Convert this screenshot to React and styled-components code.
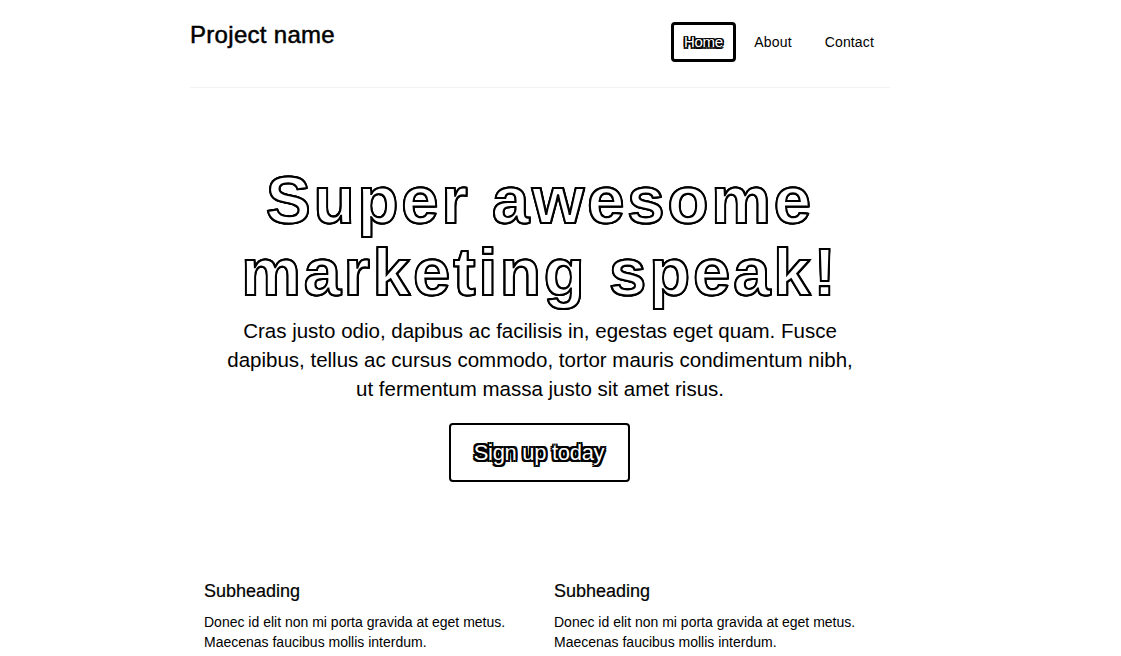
import React from "react";
import styled, { createGlobalStyle } from "styled-components";

const Global = createGlobalStyle`
  html, body { margin: 0; padding: 0; background: #fff; }
  body {
    font-family: "Liberation Sans", Arial, sans-serif;
    color: #000;
    padding-top: 22px;
  }
  * { box-sizing: border-box; }
`;

const Container = styled.div`
  width: 700px;
  margin-left: 190px;
`;

const Header = styled.header`
  display: flex;
  justify-content: space-between;
  align-items: flex-start;
  padding-bottom: 25px;
  border-bottom: 1px solid #f3f3f3;
`;

const Brand = styled.h3`
  margin: 0;
  font-size: 24px;
  font-weight: 400;
  line-height: 1.1;
  letter-spacing: 0.3px;
  -webkit-text-stroke: 0.5px #000;
`;

const Nav = styled.nav`
  display: flex;
  gap: 3px;
  margin-right: 1px;
`;

const outline = (w) => `
  text-shadow:
    ${w}px 0 0 #000, -${w}px 0 0 #000, 0 ${w}px 0 #000, 0 -${w}px 0 #000,
    ${w}px ${w}px 0 #000, -${w}px ${w}px 0 #000, ${w}px -${w}px 0 #000, -${w}px -${w}px 0 #000;
`;

const NavLink = styled.a`
  display: block;
  height: 40px;
  padding: 0 ${(p) => (p.$active ? "10.5px" : "15px")};
  font-size: ${(p) => (p.$active ? "15px" : "14px")};
  color: ${(p) => (p.$active ? "#fff" : "#000")};
  border: ${(p) => (p.$active ? "3px solid #000" : "none")};
  border-radius: 4px;
  line-height: ${(p) => (p.$active ? "34px" : "40px")};
  letter-spacing: ${(p) => (p.$active ? "-0.3px" : "0.15px")};
  text-decoration: none;
  ${(p) => (p.$active ? outline(1.5) : "")}
`;

const Jumbotron = styled.section`
  display: flex;
  flex-direction: column;
  align-items: center;
  text-align: center;
  padding-top: 76px;
`;

const Title = styled.h1`
  margin: 0;
  font-size: 67px;
  line-height: 72px;
  font-weight: 700;
  letter-spacing: 2.9px;
  color: #fff;
  -webkit-text-stroke: 2px #000;
  ${outline(0.8)}
`;

const Lead = styled.p`
  margin: 8px 0 20px;
  width: 640px;
  font-size: 20.5px;
  line-height: 29px;
  font-weight: 400;
`;

const SignUp = styled.a`
  display: flex;
  align-items: center;
  justify-content: center;
  width: 181px;
  height: 59px;
  margin-right: 2px;
  border: 2px solid #000;
  border-radius: 4px;
  font-size: 22px;
  letter-spacing: -0.3px;
  color: #fff;
  text-decoration: none;
  ${outline(2)}
`;

const Marketing = styled.section`
  display: grid;
  grid-template-columns: 1fr 1fr;
  margin-top: 99px;
`;

const Col = styled.div`
  padding: 0 14px;
`;

const SubHeading = styled.h4`
  margin: 0 0 10px;
  font-size: 18px;
  font-weight: 400;
  line-height: 1.1;
  padding-top: 1px;
  -webkit-text-stroke: 0.2px #000;
`;

const Text = styled.p`
  margin: 0;
  font-size: 14px;
  line-height: 20px;
`;

const cols = [
  ["Donec id elit non mi porta gravida at eget metus.", "Maecenas faucibus mollis interdum."],
  ["Donec id elit non mi porta gravida at eget metus.", "Maecenas faucibus mollis interdum."],
];

export default function App() {
  return (
    <>
      <Global />
      <Container>
        <Header>
          <Brand>Project name</Brand>
          <Nav>
            <NavLink $active href="#">Home</NavLink>
            <NavLink href="#">About</NavLink>
            <NavLink href="#">Contact</NavLink>
          </Nav>
        </Header>
        <Jumbotron>
          <Title>
            Super awesome
            <br />
            marketing speak!
          </Title>
          <Lead>
            Cras justo odio, dapibus ac facilisis in, egestas eget quam. Fusce
            dapibus, tellus ac cursus commodo, tortor mauris condimentum nibh,
            ut fermentum massa justo sit amet risus.
          </Lead>
          <SignUp href="#">Sign up today</SignUp>
        </Jumbotron>
        <Marketing>
          {cols.map(([a, b], i) => (
            <Col key={i}>
              <SubHeading>Subheading</SubHeading>
              <Text>
                {a}
                <br />
                {b}
              </Text>
            </Col>
          ))}
        </Marketing>
      </Container>
    </>
  );
}
